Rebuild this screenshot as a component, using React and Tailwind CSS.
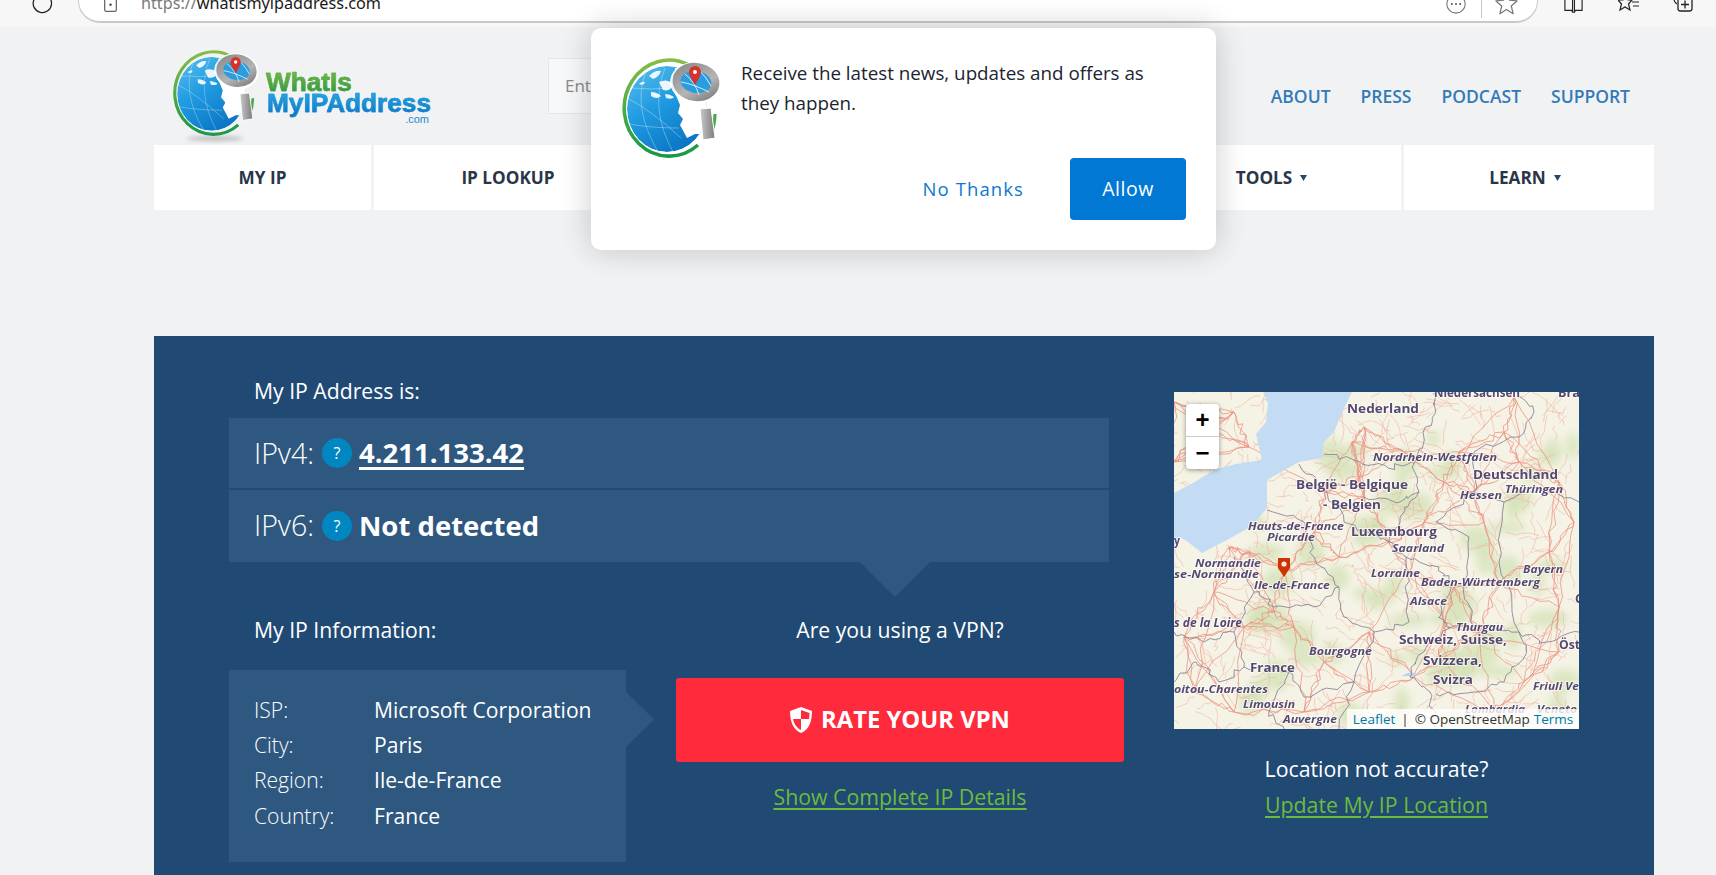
import React from "react";

function Globe({ className }) {
  return (
    <svg viewBox="0 0 100 100" className={className}>
      <defs>
        <linearGradient id="gRing" x1="0" y1="0" x2="0" y2="1">
          <stop offset="0" stopColor="#86bd45" />
          <stop offset="1" stopColor="#159a45" />
        </linearGradient>
        <linearGradient id="gBlue" x1="0" y1="0" x2="0.6" y2="1">
          <stop offset="0" stopColor="#5cc0ee" />
          <stop offset="0.5" stopColor="#1f9be0" />
          <stop offset="1" stopColor="#0b76c6" />
        </linearGradient>
        <linearGradient id="gMag" x1="0" y1="0" x2="1" y2="1">
          <stop offset="0" stopColor="#8c8c8c" />
          <stop offset="0.6" stopColor="#b5b5b5" />
          <stop offset="1" stopColor="#7d7d7d" />
        </linearGradient>
        <linearGradient id="gHandle" x1="0" y1="0" x2="1" y2="0">
          <stop offset="0" stopColor="#c9c9c9" />
          <stop offset="1" stopColor="#7b7b7b" />
        </linearGradient>
        <clipPath id="gClip">
          <ellipse cx="46" cy="51" rx="40" ry="43" />
        </clipPath>
      </defs>
      <path d="M68 7 A45 48 0 1 0 77 87" fill="none" stroke="url(#gRing)" strokeWidth="3.6" />
      <path d="M94 56 Q94 66 90 76" fill="none" stroke="#4ba845" strokeWidth="3.2" />
      <g clipPath="url(#gClip)">
        <ellipse cx="46" cy="51" rx="40" ry="43" fill="url(#gBlue)" />
        <path d="M54 35 L59 47 L57 55 L62 61 L59 67 L66 80 L74 76 L92 76 L92 10 L54 10 Z" fill="#ffffff" />
        <path d="M28 18 q6 -6 12 -5 q-2 6 -8 8z M38 24 q8 -4 14 2 q-2 8 -10 6z M30 34 q6 0 10 4 q-4 4 -10 0z M44 36 q5 0 9 3 q-2 3 -8 1z M18 26 q3 -3 6 -2 q-1 4 -6 2z" fill="#ffffff" fillOpacity="0.9" />
        <g fill="none" stroke="#ffffff" strokeOpacity="0.55" strokeWidth="0.6">
          <path d="M6 40 Q30 52 60 80" />
          <path d="M8 66 Q30 70 58 70" />
          <path d="M24 16 Q12 50 36 92" />
          <path d="M44 10 Q28 50 52 94" />
          <path d="M10 30 Q30 32 50 30" />
        </g>
      </g>
      <ellipse cx="75" cy="25" rx="26" ry="21" fill="#ffffff" fillOpacity="0.9" transform="rotate(8 75 25)" />
      <ellipse cx="75" cy="24" rx="19.5" ry="15" fill="#2b9ddf" stroke="url(#gMag)" strokeWidth="8" transform="rotate(8 75 24)" />
      <path d="M60 24 Q72 26 88 34 M64 16 Q74 24 78 37 M78 12 Q86 20 90 28" fill="none" stroke="#ffffff" strokeWidth="0.8" />
      <path d="M74 27 C70 20 68 17 68 14 A6 6 0 1 1 80 14 C80 17 78 20 74 27 Z" fill="#d6322a" />
      <circle cx="74" cy="14" r="2" fill="#ffffff" />
      <path d="M79 51 L90 50 L94 80 L82 82 Z" fill="url(#gHandle)" stroke="#ffffff" strokeWidth="1" strokeLinejoin="round" />
    </svg>
  );
}

function rnd(seed) {
  let s = seed;
  return () => {
    s = (s * 1664525 + 1013904223) % 4294967296;
    return s / 4294967296;
  };
}

function wiggle(pts, amp, r, steps = 4) {
  let d = `M${pts[0][0].toFixed(1)} ${pts[0][1].toFixed(1)}`;
  for (let i = 1; i < pts.length; i++) {
    const [a, b] = pts[i - 1];
    const [c, e] = pts[i];
    for (let k = 1; k <= steps; k++) {
      const t = k / steps;
      const j = k === steps ? 0 : amp;
      const x = a + (c - a) * t + (r() - 0.5) * j;
      const y = b + (e - b) * t + (r() - 0.5) * j;
      d += ` L${x.toFixed(1)} ${y.toFixed(1)}`;
    }
  }
  return d;
}

const cities = [
  [110, 178], [190, 105], [190, 35], [185, 85], [178, 50], [270, 90], [285, 60], [310, 130], [215, 150], [150, 100],
  [165, 165], [280, 195], [325, 190], [385, 215], [305, 240], [270, 230], [195, 300], [195, 240], [10, 245], [70, 235],
  [100, 220], [75, 160], [55, 155], [235, 180], [240, 285], [320, 320], [375, 160], [30, 35], [0, 10], [75, 55],
  [0, 70], [340, 5], [345, 70], [385, 90], [130, 320], [265, 265], [385, 260], [60, 320], [230, 60], [300, 100],
  [140, 140], [40, 200], [150, 270], [20, 300], [350, 290], [250, 130], [60, 20], [330, 40], [400, 130], [120, 235],
];

function buildRoads() {
  const r = rnd(77);
  const major = [];
  cities.forEach((c) => {
    const near = cities
      .filter((o) => o !== c)
      .map((o) => [Math.hypot(o[0] - c[0], o[1] - c[1]), o])
      .sort((a, b) => a[0] - b[0])
      .slice(0, 4);
    near.forEach(([, o]) => major.push(wiggle([c, o], 7, r, 7)));
  });
  const minor = [];
  for (let i = 0; i < 560; i++) {
    const x = r() * 405;
    const y = r() * 337;
    const a = r() * 6.28;
    const l = 10 + r() * 24;
    minor.push(wiggle([[x, y], [x + Math.cos(a) * l, y + Math.sin(a) * l]], 5, r, 4));
  }
  const green = [];
  for (let i = 0; i < 70; i++) {
    green.push([70 + r() * 335, 40 + r() * 297, 6 + r() * 16, 5 + r() * 11]);
  }
  return { major, minor, green };
}

const borders = [
  [[125, 72], [150, 95], [170, 130], [192, 140], [215, 150], [232, 165], [265, 175], [276, 192], [265, 226], [276, 236], [246, 262], [236, 285], [256, 300], [262, 337]],
  [[215, 150], [226, 125], [245, 100], [240, 72], [250, 46], [262, 20], [262, 0]],
  [[150, 62], [186, 70], [214, 76], [240, 72]],
  [[276, 236], [310, 234], [345, 240], [352, 262], [330, 290], [300, 300], [262, 302]],
  [[345, 240], [372, 250], [405, 240]],
  [[190, 105], [226, 110], [245, 100]],
  [[300, 100], [330, 110], [360, 95], [405, 110]],
  [[262, 130], [295, 145], [290, 190], [300, 234]],
  [[300, 60], [345, 45], [360, 20], [345, 0]],
  [[300, 60], [300, 100], [262, 130]],
  [[330, 110], [325, 170], [345, 240]],
  [[60, 165], [80, 200], [60, 240], [30, 250], [0, 240]],
  [[93, 118], [130, 130], [140, 165], [165, 195], [140, 215], [100, 215], [80, 200]],
  [[165, 195], [170, 225], [200, 240], [235, 230], [232, 165]],
  [[60, 240], [70, 275], [45, 290], [22, 270], [0, 290]],
  [[70, 275], [115, 280], [130, 305], [180, 290], [200, 240]],
  [[115, 280], [95, 320], [110, 337]],
  [[180, 290], [165, 337]],
];

const labels = [
  ["Niedersachsen", 260, 5, 12, 86, 1],
  ["Bra", 384, 5, 12, 22, 1],
  ["Nederland", 173, 21, 13, 72, 1],
  ["Nordrhein-Westfalen", 199, 69, 11, 124, 2],
  ["Deutschland", 299, 87, 13, 85, 1],
  ["Thüringen", 331, 101, 11, 58, 2],
  ["Hessen", 286, 107, 11, 42, 2],
  ["België - Belgique", 122, 97, 13, 112, 1],
  ["- Belgien", 149, 117, 13, 58, 1],
  ["Hauts-de-France", 74, 138, 11, 96, 2],
  ["Picardie", 93, 149, 11, 48, 2],
  ["Luxembourg", 177, 144, 13, 86, 1],
  ["Saarland", 218, 160, 11, 52, 2],
  ["y", 0, 153, 13, 6, 1],
  ["Normandie", 21, 175, 11, 66, 2],
  ["se-Normandie", 0, 186, 11, 85, 2],
  ["Lorraine", 197, 185, 11, 49, 2],
  ["Bayern", 349, 181, 11, 40, 2],
  ["Baden-Württemberg", 247, 194, 11, 119, 2],
  ["Ile-de-France", 80, 197, 11, 76, 2],
  ["C", 401, 211, 13, 8, 1],
  ["Alsace", 236, 213, 11, 37, 2],
  ["s de la Loire", 0, 235, 12, 68, 2],
  ["Thurgau", 282, 239, 11, 47, 2],
  ["Schweiz, Suisse,", 225, 252, 13, 108, 1],
  ["Öst", 385, 257, 13, 21, 1],
  ["Bourgogne", 135, 263, 11, 63, 2],
  ["Svizzera,", 249, 273, 13, 59, 1],
  ["France", 76, 280, 13, 45, 1],
  ["Svizra", 259, 292, 13, 40, 1],
  ["Friuli Ve", 359, 298, 11, 46, 2],
  ["oitou-Charentes", 0, 301, 11, 94, 2],
  ["Limousin", 69, 316, 11, 52, 2],
  ["Lombardia", 291, 321, 11, 60, 2],
  ["Veneto", 363, 321, 11, 40, 2],
  ["Auvergne", 109, 331, 11, 54, 2],
];

function MapArt() {
  const { major, minor, green } = React.useMemo(buildRoads, []);
  return (
    <svg viewBox="0 0 405 337" className="block w-[405px] h-[337px]">
      <defs>
        <filter id="mBlur"><feGaussianBlur stdDeviation="4" /></filter>
        <filter id="rBlur"><feGaussianBlur stdDeviation="0.25" /></filter>
      </defs>
      <rect width="405" height="337" fill="#f5f3e6" />
      <g filter="url(#mBlur)" fill="#d3e2b6" fillOpacity="0.75">
        {green.map((g, i) => (
          <ellipse key={i} cx={g[0]} cy={g[1]} rx={g[2]} ry={g[3]} />
        ))}
      </g>
      <g filter="url(#rBlur)" fill="none">
        <g stroke="#f2b5a5" strokeWidth="0.6">
          {minor.map((d, i) => <path key={i} d={d} />)}
        </g>
        <g stroke="#ec9483" strokeWidth="0.8">
          {major.map((d, i) => <path key={i} d={d} />)}
        </g>
      </g>
      <path
        d="M89 0 L94 11 L92 30 L82 42 L88 68 L62 72 L40 78 L19 91 L0 101 L0 155 L6 145 L14 150 L28 161 L53 148 L78 134 L93 116 L93 88 L100 84 L125 70 L148 66 L150 50 L160 40 L165 28 L172 12 L178 0 Z"
        fill="#c3dcf3"
      />
      <path d="M228 284 q6 -5 14 -3 l-2 4 q-7 -1 -12 -1z" fill="#b9d6f0" />
      <g filter="url(#rBlur)" fill="none" stroke="#858094" strokeWidth="0.85">
        {borders.map((b, i) => (
          <path key={i} d={wiggle(b, 6, rnd(i * 31 + 5), 6)} />
        ))}
      </g>
      <g filter="url(#rBlur)" fontFamily="'Open Sans', sans-serif" fontWeight="700" fill="#574a70" stroke="#ffffff" strokeOpacity="0.65" strokeWidth="1.8" style={{ paintOrder: "stroke" }}>
        {labels.map(([t, x, y, s, w, it]) => (
          <text key={t} x={x} y={y} fontSize={s} textLength={w} lengthAdjust="spacingAndGlyphs" fontStyle={it === 2 ? "italic" : "normal"}>
            {t}
          </text>
        ))}
      </g>
      <path d="M110 185 L104 176 L104 166 L116 166 L116 176 Z" fill="#cc3300" />
      <circle cx="110" cy="172" r="2.6" fill="#f4e8e0" />
    </svg>
  );
}

function Help() {
  return (
    <span className="w-[30px] h-[30px] rounded-full bg-[#0087c1] flex items-center justify-center text-[16px] leading-none font-normal text-white shrink-0">?</span>
  );
}

function Caret() {
  return (
    <svg viewBox="0 0 8 8" className="w-[7px] h-[7px] ml-[8px]">
      <path d="M0 1 H8 L4 8 Z" fill="#24466f" />
    </svg>
  );
}

function Chrome() {
  return (
    <div className="h-[27px] bg-[#f7f7f7] overflow-hidden flex items-start">
      <div className="w-[78px] pl-[32px] h-[6px] flex items-center shrink-0">
        <svg viewBox="0 0 24 24" className="w-[22px] h-[22px] shrink-0">
          <path d="M18.5 5.5 A10 10 0 1 1 8 3" fill="none" stroke="#222" strokeWidth="1.4" />
        </svg>
      </div>
      <div className="w-[1460px] h-[23px] shrink-0 bg-white border border-t-0 border-[#c9c9c9] border-b-2 rounded-b-[22px]">
        <div className="h-[6px] flex items-center pl-[24px]">
          <svg viewBox="0 0 18 24" className="w-[15px] h-[20px] shrink-0">
            <path d="M2 0 V20 Q2 22 4 22 H14 Q16 22 16 20 V0" fill="none" stroke="#666" strokeWidth="1.5" />
            <circle cx="9" cy="14" r="1.4" fill="#333" />
          </svg>
          <span className="ml-[23px] text-[16.2px] font-['Noto_Sans',sans-serif] text-[#7a7a7a] whitespace-nowrap">
            https://<span className="text-[#1a1a1a]">whatismyipaddress.com</span>
          </span>
          <div className="ml-auto flex items-center pr-[19px]">
            <svg viewBox="0 0 24 24" className="w-[22px] h-[22px] mt-[2px]">
              <circle cx="12" cy="12" r="10" fill="none" stroke="#777" strokeWidth="1.2" />
              <circle cx="7.5" cy="12" r="1.1" fill="#555" />
              <circle cx="12" cy="12" r="1.1" fill="#555" />
              <circle cx="16.5" cy="12" r="1.1" fill="#555" />
            </svg>
            <span className="w-px h-[30px] bg-[#c8c8c8] ml-[14px] mr-[13px]" />
            <svg viewBox="0 0 24 24" className="w-[23px] h-[23px]">
              <path d="M12 1 L15.2 8.6 L23 9.3 L17 14.6 L18.9 22.6 L12 18.3 L5.1 22.6 L7 14.6 L1 9.3 L8.8 8.6 Z" fill="none" stroke="#777" strokeWidth="1.3" strokeLinejoin="round" />
            </svg>
          </div>
        </div>
      </div>
      <div className="h-[12px] flex items-center">
        <svg viewBox="0 0 22 22" className="ml-[25px] w-[21px] h-[21px]">
          <path d="M2 0 V15 H9 L10 17 M20 0 V15 H13 L12 17 M10 0 V17 H12 V0" fill="none" stroke="#222" strokeWidth="1.2" />
        </svg>
        <svg viewBox="0 0 22 22" className="ml-[34px] w-[22px] h-[22px]">
          <path d="M8 0 L10 5 L14 5 L10.5 9 L12 15 L7 12 L2 15 L3.5 9 L0 5 L5 5 Z M13 2 H21 M14 7 H21 M15 11 H21" fill="none" stroke="#222" strokeWidth="1.2" />
        </svg>
        <svg viewBox="0 0 22 22" className="ml-[32px] w-[22px] h-[22px]">
          <path d="M1 0 Q2 8 5 9" fill="none" stroke="#222" strokeWidth="1.2" />
          <rect x="6" y="3" width="14" height="13" rx="2.5" fill="none" stroke="#222" strokeWidth="1.3" />
          <path d="M13 5.5 V13.5 M9 9.5 H17" stroke="#222" strokeWidth="1.3" />
        </svg>
      </div>
    </div>
  );
}

function NavCell({ w, children }) {
  return (
    <div className={`${w} h-[65px] bg-white flex items-center justify-center font-bold text-[17.2px] text-[#2a3548]`}>{children}</div>
  );
}

export default function App() {
  return (
    <div className="relative w-[1716px] h-[875px] overflow-hidden bg-[#f1f2f4] font-['Open_Sans',sans-serif]">
      <Chrome />

      <div className="w-[1500px] ml-[154px]">
        <div className="h-[118px] flex items-center relative">
          <div className="ml-[18px] w-[86px] h-[92px] relative shrink-0 mt-[20px]">
            <Globe className="w-[86px] h-[86px]" />
            <div className="mx-auto w-[56px] h-[5px] rounded-[50%] bg-[#8a8a8a] opacity-50 blur-[2px]" />
          </div>
          <div className="ml-[8px] w-[188px] shrink-0 font-['Liberation_Sans',sans-serif] font-bold text-[26.2px] leading-[21px] mt-[24px]">
            <div className="bg-linear-to-b from-[#74b944] to-[#1f9142] bg-clip-text text-transparent pb-[3px] [-webkit-text-stroke:0.5px_#4aa544]">WhatIs</div>
            <div className="ml-[1px] bg-linear-to-b from-[#25a6e3] to-[#0a6fc0] bg-clip-text text-transparent -mt-[3px] pb-[5px] [-webkit-text-stroke:0.5px_#1a8ad2]">MyIPAddress</div>
            <div className="w-[163px] -mt-[5px] text-right font-normal text-[11px] leading-[11px] text-[#1a8ad2]">.com</div>
          </div>
          <div className="ml-[94px] w-[560px] h-[56px] bg-[#f7f8f9] border border-[#e6e7e9] flex items-center pl-[16px] text-[17px] text-[#8a8a8a] shrink-0">Enter</div>
          <div className="ml-auto pr-[24px] mt-[20px] flex gap-[30px] text-[17.5px] font-semibold text-[#337ab7] relative">
            <span>ABOUT</span>
            <span>PRESS</span>
            <span>PODCAST</span>
            <span>SUPPORT</span>
          </div>
        </div>

        <div className="flex gap-[3px]">
          <NavCell w="w-[217px]">MY IP</NavCell>
          <NavCell w="w-[268px]">IP LOOKUP</NavCell>
          <NavCell w="w-[248px]">HIDE MY IP</NavCell>
          <NavCell w="w-[248px]">VPNS</NavCell>
          <NavCell w="w-[254px] pr-[5px]">TOOLS<Caret /></NavCell>
          <NavCell w="w-[250px] pr-[8px]">LEARN<Caret /></NavCell>
        </div>

        <div className="mt-[126px] h-[560px] bg-[#204a74] flex text-white">
          <div className="ml-[75px] w-[880px] shrink-0">
            <div className="h-[82px] pl-[25px] pt-[39px] text-[21.2px] leading-[32px]">My IP Address is:</div>
            <div className="relative">
              <div className="h-[70px] bg-[#2e5880] pl-[25px] flex items-center">
                <span className="font-light text-[28.5px]">IPv4:</span>
                <span className="ml-[8px]"><Help /></span>
                <span className="ml-[7px] font-bold text-[27.5px] underline decoration-[3px] underline-offset-[4px]">4.211.133.42</span>
              </div>
              <div className="h-[72px] mt-[2px] pb-[1px] bg-[#2e5880] pl-[25px] flex items-center">
                <span className="font-light text-[28.5px]">IPv6:</span>
                <span className="ml-[8px]"><Help /></span>
                <span className="ml-[7px] font-bold text-[27.5px]">Not detected</span>
              </div>
              <div className="absolute left-[631px] top-full w-[70px] h-[35px] bg-[#2e5880] [clip-path:polygon(0_0,100%_0,50%_100%)]" />
            </div>
            <div className="flex mt-[50px]">
              <div className="w-[447px] shrink-0">
                <div className="pl-[25px] h-[37px] text-[21.2px] leading-[36px]">My IP Information:</div>
                <div className="relative mt-[21px] w-[397px] h-[192px] bg-[#2e5880] pl-[25px] pt-[22px] text-[21.1px]">
                  {[
                    ["ISP:", "Microsoft Corporation"],
                    ["City:", "Paris"],
                    ["Region:", "Ile-de-France"],
                    ["Country:", "France"],
                  ].map(([k, v]) => (
                    <div key={k} className="flex h-[35.3px] items-center">
                      <span className="w-[120px] font-light">{k}</span>
                      <span>{v}</span>
                    </div>
                  ))}
                  <div className="absolute left-full top-[22px] w-[28px] h-[55px] bg-[#2e5880] [clip-path:polygon(0_0,100%_50%,0_100%)]" />
                </div>
              </div>
              <div className="w-[448px] shrink-0 flex flex-col items-center">
                <div className="h-[37px] text-[21.2px] leading-[36px]">Are you using a VPN?</div>
                <div className="mt-[29px] w-[448px] h-[84px] bg-[#ff2a3c] rounded-[3px] flex items-center justify-center font-bold text-[23.8px]">
                  <svg viewBox="0 0 22 26" className="w-[22px] h-[26px] mr-[9px]">
                    <path d="M11 0 L22 4 C22 16 18 23 11 26 C4 23 0 16 0 4 Z" fill="#ffffff" />
                    <path d="M11 3 L19.5 6 C19.5 8 19.3 10 19 12 L11 12 Z M11 12 L3 12 C4 17 7 21 11 23 Z" fill="#ff2a3c" />
                  </svg>
                  RATE YOUR VPN
                </div>
                <div className="mt-[19px] text-[21.3px] text-[#6cbb3c] underline underline-offset-[3px]">Show Complete IP Details</div>
              </div>
            </div>
          </div>

          <div className="ml-[65px] w-[405px] shrink-0 pt-[56px] flex flex-col items-center">
            <div className="relative w-[405px] h-[337px] overflow-hidden">
              <MapArt />
              <div className="absolute left-[12px] top-[12px] w-[33px] h-[65px] bg-white rounded-[4px] shadow-[0_1px_5px_rgba(0,0,0,0.4)] flex flex-col text-black font-['Liberation_Sans',sans-serif] font-bold">
                <div className="h-[33px] border-b border-[#cccccc] flex items-center justify-center text-[24px] leading-none">+</div>
                <div className="h-[32px] flex items-center justify-center text-[24px] leading-none">−</div>
              </div>
              <div className="absolute right-0 bottom-0 h-[20px] w-[232px] bg-white/80 flex items-center justify-center text-[13.5px] text-[#333333] whitespace-nowrap">
                <span className="text-[#0078a8]">Leaflet</span>
                <span className="mx-[6px]">|</span>
                <span>© OpenStreetMap</span>
                <span className="ml-[4px] text-[#0078a8]">Terms</span>
              </div>
            </div>
            <div className="mt-[24px] text-[21.3px] leading-[32px]">Location not accurate?</div>
            <div className="mt-[4px] text-[21.3px] leading-[32px] text-[#6cbb3c] underline underline-offset-[3px]">Update My IP Location</div>
          </div>
        </div>
      </div>

      <div className="absolute left-[591px] top-[28px] w-[625px] h-[222px] bg-white rounded-[10px] shadow-[0_0_32px_rgba(0,0,0,0.2)] flex flex-col">
        <div className="flex pl-[30px] pt-[30px]">
          <Globe className="w-[100px] h-[100px] shrink-0" />
          <p className="ml-[20px] w-[425px] mt-[1px] text-[18.8px] leading-[29.5px] text-[#1b2430]">
            Receive the latest news, updates and offers as they happen.
          </p>
        </div>
        <div className="absolute right-[30px] top-[130px] flex items-center">
          <span className="text-[#0b78d0] text-[18.5px] tracking-[1.1px]">No Thanks</span>
          <span className="ml-[46px] w-[116px] h-[62px] rounded-[4px] bg-[#0078d4] text-white text-[19.5px] tracking-[0.5px] flex items-center justify-center">Allow</span>
        </div>
      </div>
    </div>
  );
}
